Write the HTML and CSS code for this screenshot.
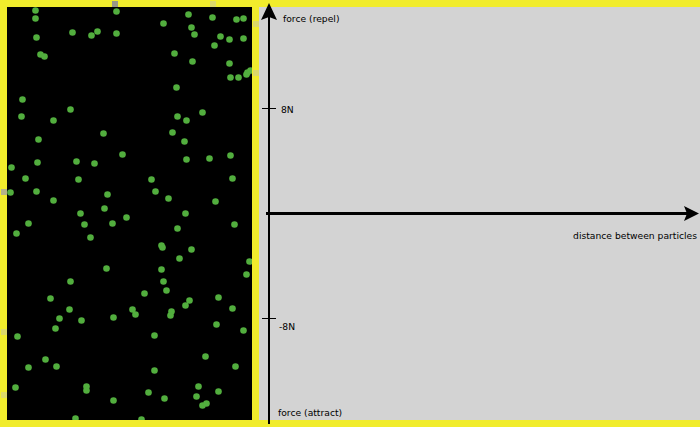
FILE: index.html
```html
<!DOCTYPE html>
<html lang="en">

<head>
    <meta charset="UTF-8">
    <meta name="viewport" content="width=device-width, initial-scale=1.0">
    <title>Particle Forces</title>
    <link rel="stylesheet" href="styles.css">
</head>

<body>
    <div class="stage">
        <svg class="world" id="world" width="245" height="413" viewBox="0 0 245 413"></svg>

        <div class="graph">
            <svg class="axes" width="441" height="413" viewBox="0 0 441 413">
                <!-- vertical axis -->
                <line x1="10" y1="4" x2="10" y2="417" stroke="#000" stroke-width="2" />
                <polygon points="10,-4 18,13 10,10 2,13" fill="#000" />
                <!-- horizontal axis -->
                <line x1="7" y1="206.5" x2="432" y2="206.5" stroke="#000" stroke-width="3" />
                <polygon points="440,206.5 425,199 428,206.5 425,214" fill="#000" />
                <!-- ticks -->
                <line x1="3" y1="101.5" x2="17" y2="101.5" stroke="#000" stroke-width="1" />
                <line x1="3" y1="311.5" x2="17" y2="311.5" stroke="#000" stroke-width="1" />

                <text class="label" x="24" y="15">force (repel)</text>
                <text class="label" x="22" y="106">8N</text>
                <text class="label" x="20" y="323">-8N</text>
                <text class="label" x="438" y="232" text-anchor="end">distance between particles</text>
                <text class="label" x="19" y="409">force (attract)</text>
            </svg>
        </div>
    </div>

    <!-- particles drifting over the frame edge -->
    <span class="ghost dark" style="left:112px;top:1px"></span>
    <span class="ghost faint" style="left:210px;top:1px"></span>
    <span class="ghost faint" style="left:253px;top:21px"></span>
    <span class="ghost faint" style="left:253px;top:70px"></span>
    <span class="ghost mid" style="left:1px;top:189px"></span>
    <span class="ghost faint" style="left:1px;top:329px"></span>
    <span class="ghost faint" style="left:1px;top:392px"></span>

    <script>
        // particle positions in page coordinates
        const particles = [
            [35, 10], [116, 11], [35, 18], [188, 14], [212, 17], [236, 19], [243, 18],
            [163, 23], [191, 27], [72, 32], [91, 35], [97, 31], [116, 33], [194, 34],
            [36, 37], [220, 36], [229, 39], [243, 38], [214, 45], [40, 54], [44, 56],
            [174, 53], [192, 61], [229, 63], [247, 72], [250, 70], [246, 74], [230, 77],
            [238, 77], [176, 87], [22, 99], [70, 109], [21, 116], [53, 120], [177, 116],
            [186, 120], [202, 112], [172, 132], [103, 133], [38, 139], [184, 141],
            [11, 167], [37, 162], [76, 161], [94, 163], [122, 154], [186, 159], [209, 158],
            [230, 155], [25, 178], [78, 179], [151, 179], [232, 178], [10, 192], [36, 191],
            [53, 200], [107, 194], [155, 191], [168, 198], [215, 201], [80, 213], [104, 208],
            [185, 213], [28, 223], [84, 224], [112, 223], [126, 217], [234, 224], [16, 233],
            [90, 237], [177, 228], [161, 245], [162, 247], [191, 249], [179, 258], [249, 261],
            [106, 268], [161, 269], [246, 274], [70, 281], [163, 281],
            [50, 298], [144, 293], [166, 290], [189, 300], [218, 297], [185, 305], [232, 308],
            [69, 309], [59, 318], [81, 320], [113, 317], [132, 309], [135, 314], [171, 311],
            [170, 315], [216, 324], [243, 330], [55, 328], [17, 336], [154, 335], [205, 356],
            [45, 359], [28, 367], [56, 366], [235, 366], [154, 370], [15, 387], [86, 386],
            [86, 390], [198, 386], [218, 391], [148, 392], [164, 398], [196, 396], [113, 400],
            [202, 405], [206, 403], [75, 418], [141, 419]
        ];

        const world = document.getElementById('world');
        const ns = 'http://www.w3.org/2000/svg';

        particles.forEach(([x, y]) => {
            const dot = document.createElementNS(ns, 'circle');
            dot.setAttribute('cx', x - 7 + 0.5);
            dot.setAttribute('cy', y - 7 + 0.5);
            dot.setAttribute('r', 3.3);
            dot.setAttribute('class', 'particle');
            world.appendChild(dot);
        });
    </script>
</body>

</html>
```

FILE: styles.css
```css
/* General Styles */
body {
    margin: 0;
    background-color: #f1ec2c;
    font-family: 'DejaVu Sans', sans-serif;
    overflow: hidden;
}

.stage {
    display: flex;
    gap: 7px;
    height: 427px;
    padding: 7px 0 7px 7px;
    box-sizing: border-box;
}

.world {
    display: block;
    flex: none;
    background-color: #000;
}

.particle {
    fill: #52ae3e;
}

.graph {
    flex: 1;
    background-color: #d3d3d3;
}

.axes {
    display: block;
    overflow: visible;
}

.label {
    font-size: 9.2px;
    fill: #000;
}

/* particles outside the box */
.ghost {
    position: absolute;
    width: 6px;
    height: 6px;
}

.ghost.dark {
    background-color: #999788;
}

.ghost.mid {
    background-color: #b5b38a;
}

.ghost.faint {
    background-color: #dcd86a;
}
```
